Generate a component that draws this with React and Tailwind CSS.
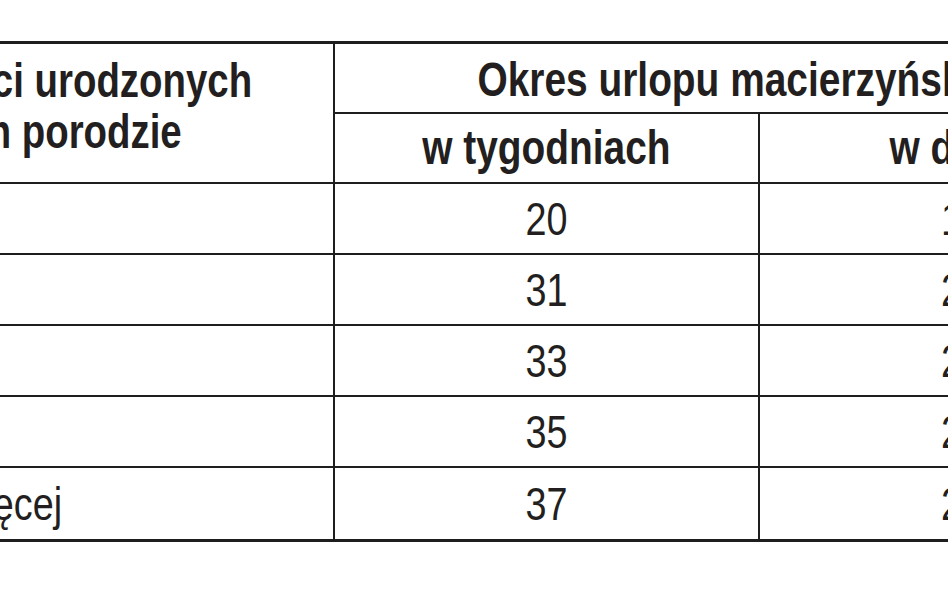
import React from 'react';

const rows = [
  { label: '1 dziecko', weeks: '20', days: '140' },
  { label: '2 dzieci', weeks: '31', days: '217' },
  { label: '3 dzieci', weeks: '33', days: '231' },
  { label: '4 dzieci', weeks: '35', days: '245' },
  { label: '5 dzieci i więcej', weeks: '37', days: '259' },
];

const font = { fontFamily: '"Liberation Sans", Arial, sans-serif' };

// condensed look: Liberation Sans squeezed horizontally
const Narrow = ({ children, className = '' }) => (
  <span className={`inline-block scale-x-[0.81] whitespace-nowrap ${className}`}>{children}</span>
);

const App = () => {
  return (
    <div className="w-[948px] h-[593px] bg-white overflow-hidden pt-[41px] text-[#231f20]" style={font}>
      <div className="w-[1185px] border-t-[3px] border-b-[3px] border-[#1e1e1e]">
        {/* header */}
        <div className="flex h-[140px] border-b-2 border-[#1e1e1e]">
          <div className="w-[335px] shrink-0 border-r-2 border-[#1e1e1e] flex items-center pb-[14px] overflow-hidden">
            <div className="-ml-[213px] font-bold text-[48px] leading-[51px] origin-left scale-x-[0.8] whitespace-nowrap">
              <div>Liczba dzieci urodzonych</div>
              <div>przy jednym porodzie</div>
            </div>
          </div>
          <div className="flex-1 flex flex-col">
            <div className="h-[70px] border-b-2 border-[#1e1e1e] flex items-center justify-center pt-1 font-bold text-[48px] leading-none">
              <Narrow>Okres urlopu macierzyńskiego</Narrow>
            </div>
            <div className="flex-1 flex">
              <div className="w-[425px] border-r-2 border-[#1e1e1e] flex items-center justify-center font-bold text-[48px] leading-none">
                <Narrow>w tygodniach</Narrow>
              </div>
              <div className="flex-1 flex items-center justify-center font-bold text-[48px] leading-none">
                <Narrow>w dniach</Narrow>
              </div>
            </div>
          </div>
        </div>
        {/* data rows */}
        {rows.map((r, i) => (
          <div
            key={r.weeks}
            className={`flex h-[71px] ${i < rows.length - 1 ? 'border-b-2 border-[#1e1e1e]' : ''}`}
          >
            <div className="w-[335px] shrink-0 border-r-2 border-[#1e1e1e] flex items-center overflow-hidden">
              <div className="-ml-[200px] text-[46px] leading-none origin-left scale-x-[0.82] whitespace-nowrap">
                {r.label}
              </div>
            </div>
            <div className="w-[425px] shrink-0 border-r-2 border-[#1e1e1e] flex items-center justify-center text-[46px] leading-none">
              <span className="inline-block scale-x-[0.82]">{r.weeks}</span>
            </div>
            <div className="flex-1 flex items-center justify-center text-[46px] leading-none">
              <span className="inline-block scale-x-[0.82]">{r.days}</span>
            </div>
          </div>
        ))}
      </div>
    </div>
  );
};

export default App;
